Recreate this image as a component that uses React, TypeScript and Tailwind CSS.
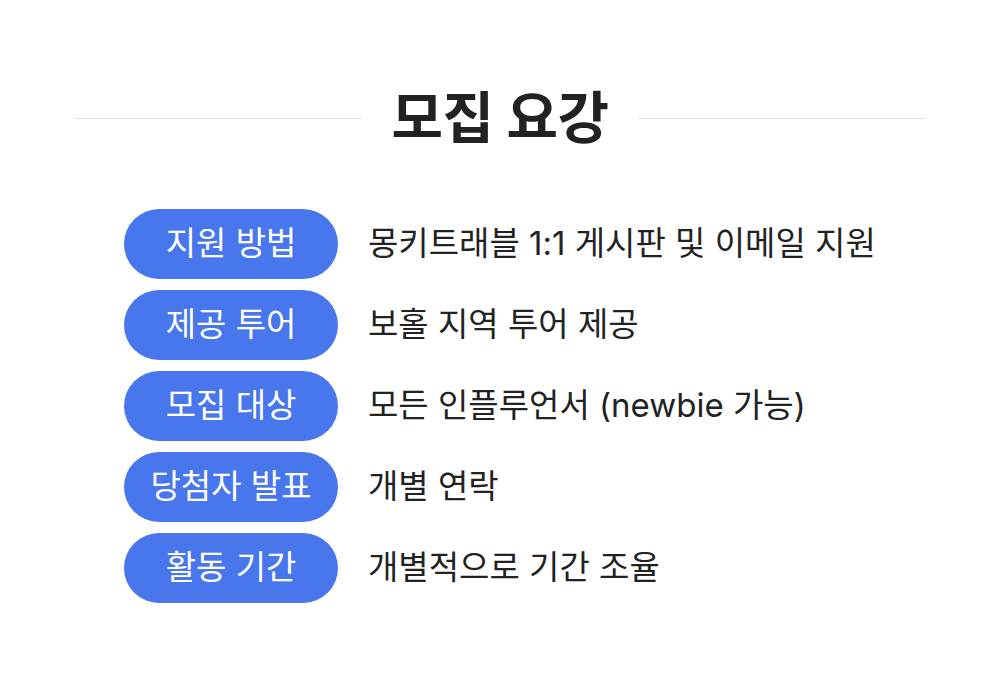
const rows = [
  { label: '지원 방법', value: '몽키트래블 1:1 게시판 및 이메일 지원' },
  { label: '제공 투어', value: '보홀 지역 투어 제공' },
  { label: '모집 대상', value: '모든 인플루언서 (newbie 가능)' },
  { label: '당첨자 발표', value: '개별 연락' },
  { label: '활동 기간', value: '개별적으로 기간 조율' },
]

export default function App() {
  return (
    <div
      className="w-[1000px] h-[684px] bg-white text-[#222222]"
      style={{ fontFamily: 'Inter, "Noto Sans CJK KR", sans-serif' }}
    >
      <div className="flex items-center px-[74px] pt-[82px]">
        <div className="h-px flex-1 bg-[#e0e0e0]" />
        <h1 className="px-[30px] text-[56px] leading-[72px] font-bold tracking-[-0.5px] text-[#222222]">
          모집 요강
        </h1>
        <div className="h-px flex-1 bg-[#e0e0e0]" />
      </div>

      <div className="mt-[55px] flex flex-col gap-[11px] pl-[124px]">
        {rows.map((row) => (
          <div key={row.label} className="flex items-center gap-[30px]">
            <div className="flex h-[70px] w-[214px] items-center justify-center rounded-full bg-[#4876ec] text-[33px] text-white">
              {row.label}
            </div>
            <div className="text-[33px]">{row.value}</div>
          </div>
        ))}
      </div>
    </div>
  )
}
